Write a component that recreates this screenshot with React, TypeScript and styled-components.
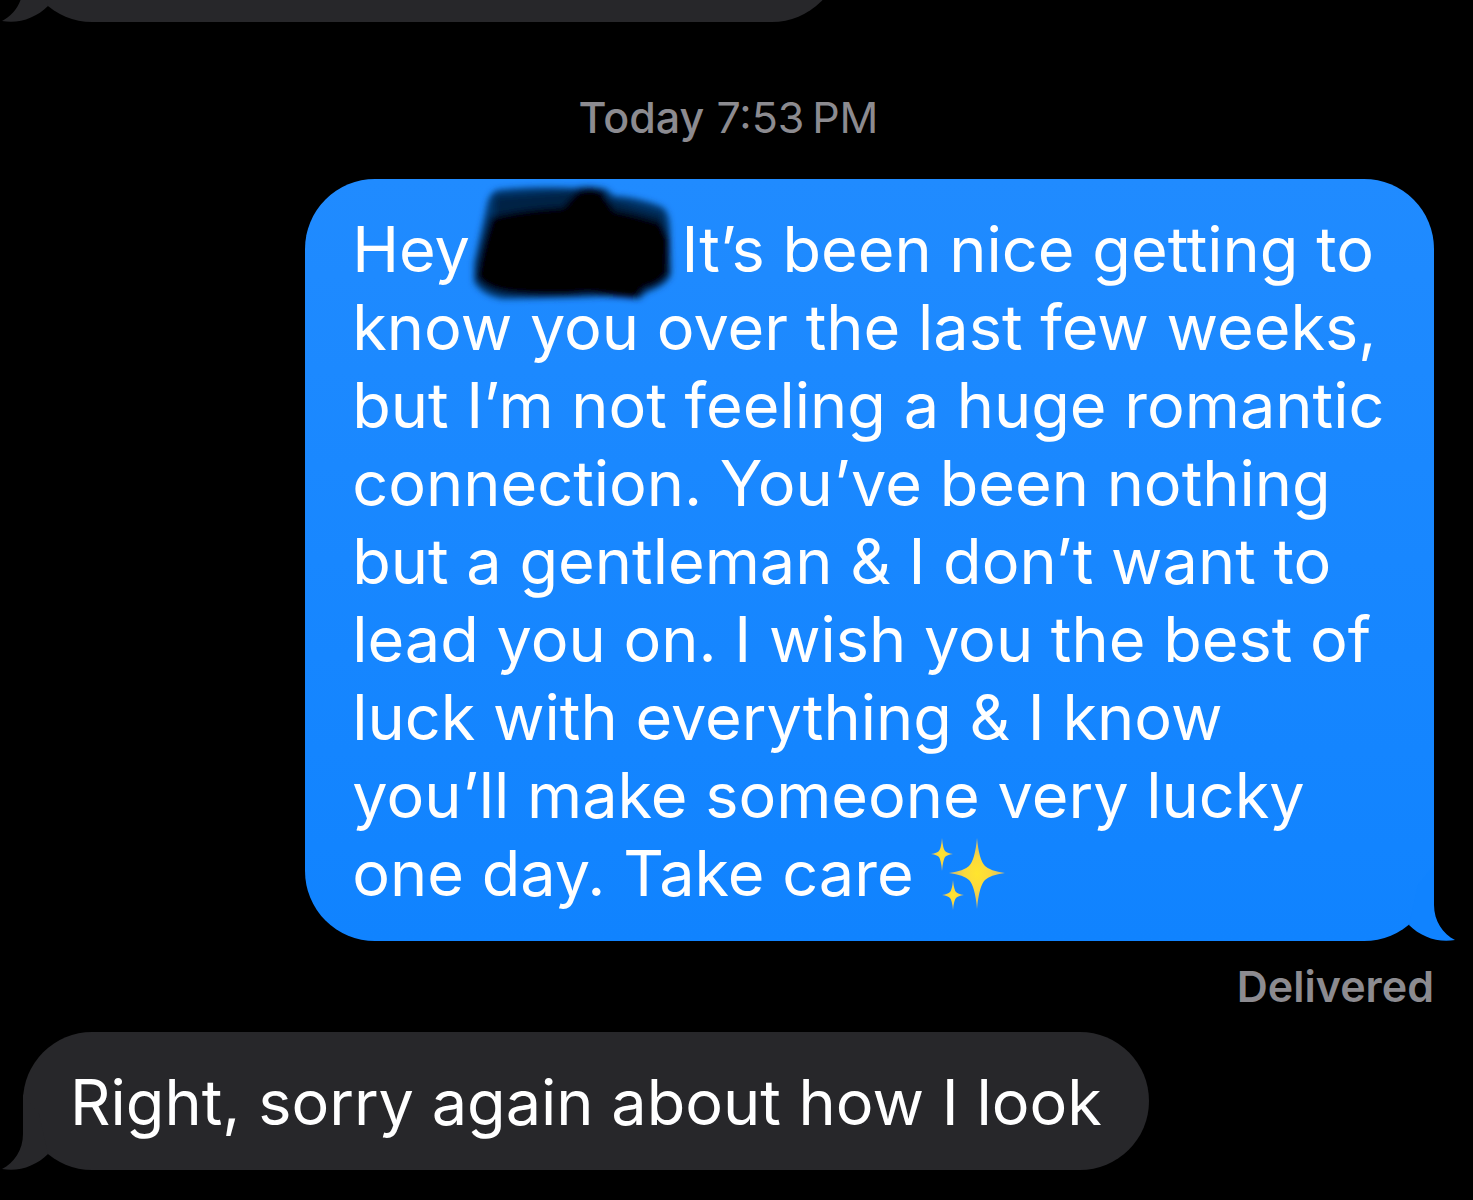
import React from "react";
import styled, { createGlobalStyle, css } from "styled-components";

const GlobalStyle = createGlobalStyle`
  body {
    margin: 0;
    background: #000;
    font-family: Inter, "Liberation Sans", sans-serif;
    overflow: hidden;
  }
`;

const Thread = styled.main`
  display: flex;
  flex-direction: column;
  min-height: 100vh;
  padding: 0 39px 0 23px;
  box-sizing: border-box;
  background: #000;
`;

const ScrolledRow = styled.div`
  display: flex;
  align-items: flex-end;
  height: 22px;
  margin-left: -23px;
  padding-left: 23px;
  overflow: hidden;
`;

const Bubble = styled.article<{ $sent?: boolean }>`
  position: relative;
  box-sizing: border-box;
  padding: 31px 47px 29px;
  border-radius: 70px;
  color: #fff;
  font-size: 63px;
  line-height: 78px;
  ${(p) =>
    p.$sent
      ? css`
          align-self: flex-end;
          width: 80%;
          background: linear-gradient(#208bff, #1083ff);
        `
      : css`
          align-self: flex-start;
          background: #27272a;
        `}
`;

const EarlierBubble = styled(Bubble)`
  flex: none;
  width: 58%;
  height: 138px;
  align-self: flex-end;
`;

const Line = styled.span`
  display: block;
  white-space: nowrap;
`;

const TailShape = styled.svg<{ $sent?: boolean }>`
  position: absolute;
  bottom: 0;
  width: 52px;
  height: 76px;
  ${(p) =>
    p.$sent
      ? css`
          right: -22px;
          color: #1083ff;
        `
      : css`
          left: -22px;
          color: #27272a;
          transform: scaleX(-1);
        `}
`;

const Stamp = styled.time`
  margin: 70px 0 37px;
  color: #8c8b90;
  font-size: 43px;
  line-height: 50px;
  text-align: center;
`;

const StampDay = styled.strong`
  font-weight: 500;
`;

const Receipt = styled.p`
  margin: 20px 0 21px;
  color: #8c8b90;
  font-size: 43px;
  font-weight: 600;
  line-height: 50px;
  text-align: right;
`;

const HiddenName = styled.span`
  position: relative;
  display: inline-block;
  width: 176px;
  height: 1em;
  vertical-align: middle;
`;

const Scribble = styled.svg`
  position: absolute;
  left: -25px;
  top: -44px;
  width: 220px;
  height: 130px;
`;

const SparkleIcon = styled.svg`
  width: 74px;
  height: 72px;
  vertical-align: -14px;
`;

function Tail({ sent }: { sent?: boolean }) {
  return (
    <TailShape $sent={sent} viewBox="0 0 52 76" aria-hidden="true">
      <path
        fill="currentColor"
        d="M14 20 L30 0 V40 C30 56 39 69 51 75 C34 78 17 72 5 60 Z"
      />
    </TailShape>
  );
}

function Redaction() {
  return (
    <HiddenName>
      <Scribble viewBox="0 0 220 130" aria-hidden="true">
        <defs>
          <filter id="soft" x="-10%" y="-10%" width="120%" height="120%">
            <feGaussianBlur stdDeviation="3" />
          </filter>
        </defs>
        <g filter="url(#soft)">
          <path
            fill="#06366b"
            d="M35 11 Q70 7 112 9 Q124 6 143 10 L151 17 Q175 18 199 28 Q208 33 207 60 L208 95 Q205 106 184 113 L176 120 Q145 116 125 118 L40 120 Q20 117 11 103 L11 84 L25 22 Q28 13 35 11Z"
          />
          <path
            fill="#000"
            d="M28 38 Q60 30 100 28 L115 11 Q128 7 140 12 L151 31 Q180 37 199 44 L206 60 L206 94 Q199 106 182 110 L174 119 Q150 117 125 115 Q90 119 48 115 Q22 112 13 98 Q17 70 28 38Z"
          />
          <path
            fill="#000"
            opacity="0.35"
            d="M33 18 L113 12 L151 22 L199 36 L201 85 L28 80Z"
          />
        </g>
      </Scribble>
    </HiddenName>
  );
}

function Sparkles() {
  return (
    <SparkleIcon viewBox="0 0 74 72" role="img" aria-label="sparkles">
      <defs>
        <radialGradient id="gold">
          <stop offset="0" stopColor="#ffe52e" />
          <stop offset="0.45" stopColor="#fcd93c" />
          <stop offset="1" stopColor="#c9b779" />
        </radialGradient>
      </defs>
      <g fill="url(#gold)">
        <path d="M46 0 Q48 22 54 28 Q59 33 74 35 Q59 37 54 42 Q48 48 46 71 Q44 48 38 42 Q33 37 18 35 Q33 33 38 28 Q44 22 46 0Z" />
        <path d="M11 0 Q12 11 14 13 Q16 15 22 16 Q16 17 14 19 Q12 22 11 33 Q10 22 8 19 Q6 17 0 16 Q6 15 8 13 Q10 11 11 0Z" />
        <path d="M22 42 Q23 52 25 54 Q27 56 33 57 Q27 58 25 60 Q23 62 22 72 Q21 62 19 60 Q17 58 11 57 Q17 56 19 54 Q21 52 22 42Z" />
      </g>
    </SparkleIcon>
  );
}

const sentLines: React.ReactNode[] = [
  <>
    Hey <Redaction /> It’s been nice getting to
  </>,
  "know you over the last few weeks,",
  "but I’m not feeling a huge romantic",
  "connection. You’ve been nothing",
  "but a gentleman & I don’t want to",
  "lead you on. I wish you the best of",
  "luck with everything & I know",
  "you’ll make someone very lucky",
  <>
    one day. Take care <Sparkles />
  </>,
];

export default function App() {
  return (
    <>
      <GlobalStyle />
      <Thread>
        <ScrolledRow>
          <EarlierBubble>
            <Tail />
          </EarlierBubble>
        </ScrolledRow>
        <Stamp>
          <StampDay>Today</StampDay> 7:53&#8201;PM
        </Stamp>
        <Bubble $sent>
          {sentLines.map((line, i) => (
            <Line key={i}>{line}</Line>
          ))}
          <Tail sent />
        </Bubble>
        <Receipt>Delivered</Receipt>
        <Bubble>
          <Line>Right, sorry again about how I look</Line>
          <Tail />
        </Bubble>
      </Thread>
    </>
  );
}
